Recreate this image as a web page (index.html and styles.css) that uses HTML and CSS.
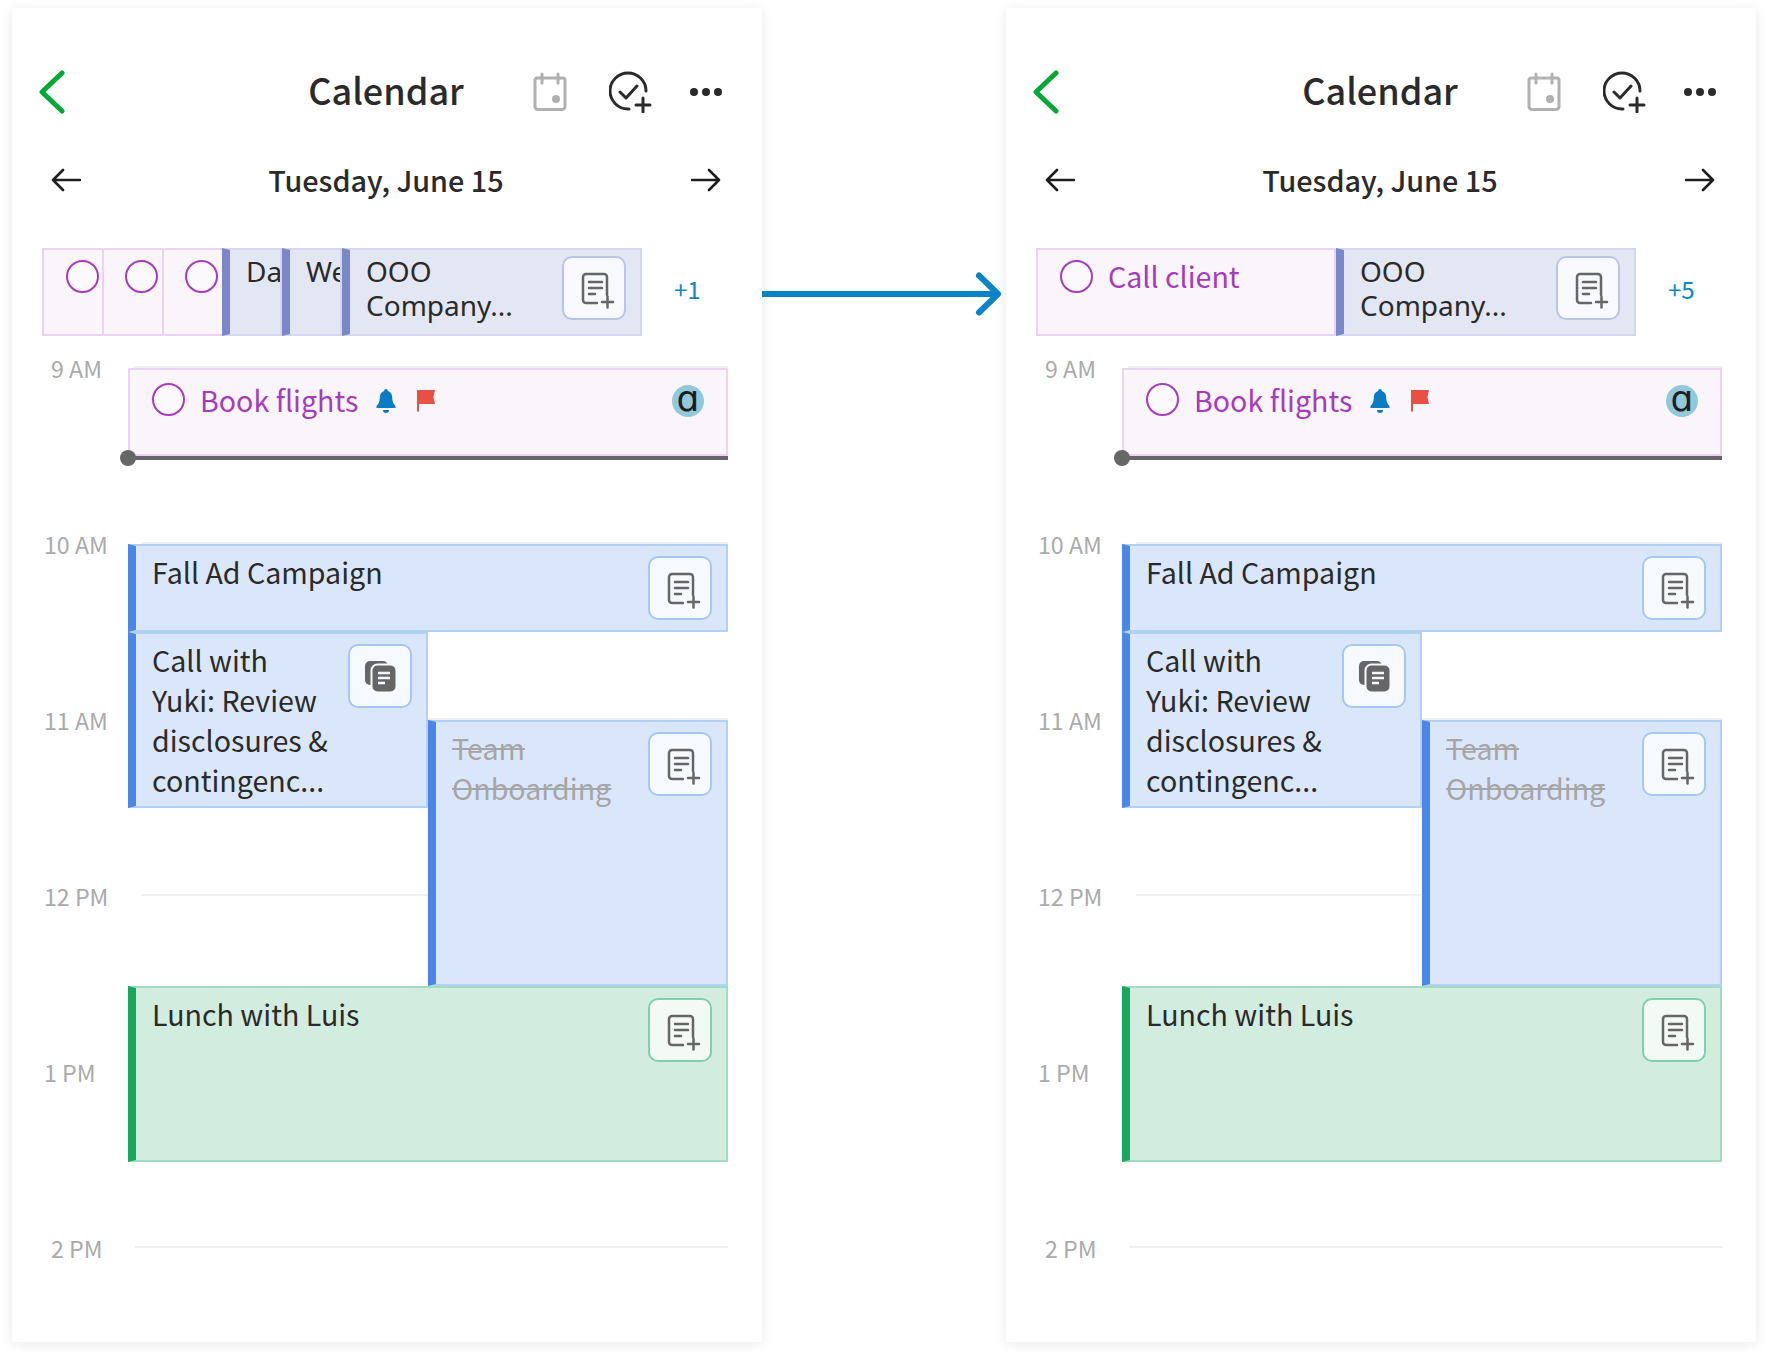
FILE: index.html
```html
<!DOCTYPE html>
<html lang="en">
<head>
<meta charset="utf-8">
<title>Calendar</title>
<link rel="stylesheet" href="styles.css">
</head>
<body>
<svg class="defs" width="0" height="0" aria-hidden="true">
  <symbol id="note" viewBox="0 0 40 40">
    <path d="M32 26V8a3 3 0 0 0-3-3H11a3 3 0 0 0-3 3v23a3 3 0 0 0 3 3h11M14 13h13M14 19h13M14 25h6M27 33h11M32.500 27.500v11" fill="none" stroke="#666" stroke-width="2.5" stroke-linecap="round"/>
  </symbol>
  <symbol id="copy" viewBox="0 0 32 32">
    <rect x="1" y="1" width="23" height="24" rx="5" fill="#666"/>
    <rect x="7.5" y="4.5" width="25" height="28" rx="6" fill="#666" stroke="#f6f9fe" stroke-width="2"/>
    <path d="M14 13h12M14 18h12M14 23h7" stroke="#f6f9fe" stroke-width="2.400"/>
  </symbol>
  <symbol id="back" viewBox="0 0 26 44"><path d="M23 3 3 22l20 19" fill="none" stroke="#00a838" stroke-width="5" stroke-linecap="round" stroke-linejoin="round"/></symbol>
  <symbol id="cal" viewBox="0 0 36 40"><path d="M10 2v9M26 2v9M5 6h26a2.500 2.500 0 0 1 2 2.500v26a3 3 0 0 1-3 3H6a3 3 0 0 1-3-3V8.500A2.500 2.500 0 0 1 5 6z" fill="none" stroke="#b0b0b0" stroke-width="3" stroke-linecap="round"/><circle cx="24" cy="27" r="4" fill="#b0b0b0"/></symbol>
  <symbol id="chk" viewBox="0 0 44 42"><path d="M37 20a18 18 0 1 0-18 18h1M11 21l6 6 11-12M27 34h14M34 27v14" fill="none" stroke="#2a2a2a" stroke-width="3" stroke-linecap="round" stroke-linejoin="round"/></symbol>
  <symbol id="dots" viewBox="0 0 32 8"><circle cx="4" cy="4" r="4" fill="#2a2a2a"/><circle cx="16" cy="4" r="4" fill="#2a2a2a"/><circle cx="28" cy="4" r="4" fill="#2a2a2a"/></symbol>
  <symbol id="left" viewBox="0 0 30 24"><path d="M29 12H2M12 2 2 12l10 10" fill="none" stroke="#1e1e1e" stroke-width="2.600" stroke-linecap="round" stroke-linejoin="round"/></symbol>
  <symbol id="right" viewBox="0 0 30 24"><path d="M1 12h27M18 2l10 10-10 10" fill="none" stroke="#1e1e1e" stroke-width="2.600" stroke-linecap="round" stroke-linejoin="round"/></symbol>
  <symbol id="bell" viewBox="0 0 20 24"><path d="M10 0a1.800 1.800 0 0 1 1.800 2c3 .8 4.400 3.400 4.400 6.500 0 4 1.200 6.500 3.300 8.500v2H.5v-2c2.100-2 3.300-4.500 3.300-8.500 0-3.100 1.400-5.700 4.400-6.500A1.800 1.800 0 0 1 10 0zM7 21h6a3 3 0 0 1-6 0z" fill="#0a7cc4"/></symbol>
  <symbol id="flag" viewBox="0 0 18 22"><path d="M0 0h18l-1.500 7 1.500 7H2v7.500H0z" fill="#ea4f44"/></symbol>
</svg>

<main class="page">
  <section class="panel">
    <header class="top">
      <svg class="ic-back"><use href="#back"/></svg>
      <h1 class="title">Calendar</h1>
      <div class="actions">
        <svg class="ic-cal"><use href="#cal"/></svg>
        <svg class="ic-chk"><use href="#chk"/></svg>
        <svg class="ic-dots"><use href="#dots"/></svg>
      </div>
    </header>
    <nav class="dateline">
      <svg class="ic-arrow"><use href="#left"/></svg>
      <h2 class="date">Tuesday, June 15</h2>
      <svg class="ic-arrow"><use href="#right"/></svg>
    </nav>
    <div class="allday">
      <div class="strip">
        <div class="task-cell"><span class="ring"></span></div>
        <div class="task-cell"><span class="ring"></span></div>
        <div class="task-cell"><span class="ring"></span></div>
        <div class="ooo-cell narrow">Da</div>
        <div class="ooo-cell narrow">We</div>
        <div class="ooo-cell wide"><span class="ooo-text">OOO<br>Company...</span><button class="btn btn-ooo"><svg class="ic-note"><use href="#note"/></svg></button></div>
      </div>
      <span class="more">+1</span>
    </div>
    <div class="timeline">
      <div class="hour short"><span class="hour-label">9 AM</span><span class="hour-rule"></span></div>
      <div class="hour"><span class="hour-label">10 AM</span><span class="hour-rule"></span></div>
      <div class="hour"><span class="hour-label">11 AM</span><span class="hour-rule"></span></div>
      <div class="hour"><span class="hour-label">12 PM</span><span class="hour-rule"></span></div>
      <div class="hour"><span class="hour-label">1 PM</span><span class="hour-rule"></span></div>
      <div class="hour short"><span class="hour-label">2 PM</span><span class="hour-rule"></span></div>

      <div class="event task ev-book">
        <span class="ring"></span><span class="task-name">Book flights</span>
        <svg class="ic-bell"><use href="#bell"/></svg>
        <svg class="ic-flag"><use href="#flag"/></svg>
        <span class="avatar">ɑ</span>
      </div>
      <div class="now"></div>
      <div class="event blue ev-fall"><span class="ev-text">Fall Ad Campaign</span><button class="btn btn-blue"><svg class="ic-note"><use href="#note"/></svg></button></div>
      <div class="event blue ev-call"><span class="ev-text">Call with<br>Yuki: Review<br>disclosures &amp;<br>contingenc...</span><button class="btn btn-blue"><svg class="ic-copy"><use href="#copy"/></svg></button></div>
      <div class="event blue ev-team"><span class="ev-text struck">Team<br>Onboarding</span><button class="btn btn-blue"><svg class="ic-note"><use href="#note"/></svg></button></div>
      <div class="event green ev-lunch"><span class="ev-text">Lunch with Luis</span><button class="btn btn-green"><svg class="ic-note"><use href="#note"/></svg></button></div>
    </div>
  </section>

  <div class="flow-arrow">
    <svg width="244" height="48" viewBox="0 0 244 48"><path d="M0 24h236" fill="none" stroke="#0a84c6" stroke-width="6"/><path d="M217 5.500 236 24l-19 18.500" fill="none" stroke="#0a84c6" stroke-width="6" stroke-linecap="round" stroke-linejoin="round"/></svg>
  </div>

  <section class="panel">
    <header class="top">
      <svg class="ic-back"><use href="#back"/></svg>
      <h1 class="title">Calendar</h1>
      <div class="actions">
        <svg class="ic-cal"><use href="#cal"/></svg>
        <svg class="ic-chk"><use href="#chk"/></svg>
        <svg class="ic-dots"><use href="#dots"/></svg>
      </div>
    </header>
    <nav class="dateline">
      <svg class="ic-arrow"><use href="#left"/></svg>
      <h2 class="date">Tuesday, June 15</h2>
      <svg class="ic-arrow"><use href="#right"/></svg>
    </nav>
    <div class="allday">
      <div class="strip">
        <div class="task-cell merged"><span class="ring"></span><span class="task-name">Call client</span></div>
        <div class="ooo-cell wide"><span class="ooo-text">OOO<br>Company...</span><button class="btn btn-ooo"><svg class="ic-note"><use href="#note"/></svg></button></div>
      </div>
      <span class="more">+5</span>
    </div>
    <div class="timeline">
      <div class="hour short"><span class="hour-label">9 AM</span><span class="hour-rule"></span></div>
      <div class="hour"><span class="hour-label">10 AM</span><span class="hour-rule"></span></div>
      <div class="hour"><span class="hour-label">11 AM</span><span class="hour-rule"></span></div>
      <div class="hour"><span class="hour-label">12 PM</span><span class="hour-rule"></span></div>
      <div class="hour"><span class="hour-label">1 PM</span><span class="hour-rule"></span></div>
      <div class="hour short"><span class="hour-label">2 PM</span><span class="hour-rule"></span></div>

      <div class="event task ev-book">
        <span class="ring"></span><span class="task-name">Book flights</span>
        <svg class="ic-bell"><use href="#bell"/></svg>
        <svg class="ic-flag"><use href="#flag"/></svg>
        <span class="avatar">ɑ</span>
      </div>
      <div class="now"></div>
      <div class="event blue ev-fall"><span class="ev-text">Fall Ad Campaign</span><button class="btn btn-blue"><svg class="ic-note"><use href="#note"/></svg></button></div>
      <div class="event blue ev-call"><span class="ev-text">Call with<br>Yuki: Review<br>disclosures &amp;<br>contingenc...</span><button class="btn btn-blue"><svg class="ic-copy"><use href="#copy"/></svg></button></div>
      <div class="event blue ev-team"><span class="ev-text struck">Team<br>Onboarding</span><button class="btn btn-blue"><svg class="ic-note"><use href="#note"/></svg></button></div>
      <div class="event green ev-lunch"><span class="ev-text">Lunch with Luis</span><button class="btn btn-green"><svg class="ic-note"><use href="#note"/></svg></button></div>
    </div>
  </section>
</main>
</body>
</html>
```

FILE: styles.css
```css
* { box-sizing: border-box; }
html, body { margin: 0; padding: 0; background: #fff; }
body { font-family: "Noto Sans CJK JP", "Noto Sans", sans-serif; color: #2a2a2a; }
.defs { position: absolute; }
svg { display: block; flex: none; overflow: visible; }

.page { display: flex; padding: 8px 12px 16px; height: 1358px; }
.panel { width: 750px; height: 1334px; background: #fff; flex: none; display: flex; flex-direction: column; box-shadow: 0 2px 12px rgba(0,0,0,.09); }
.flow-arrow { flex: 1; padding-top: 262px; }

.top { flex: none; display: grid; grid-template-columns: 1fr auto 1fr; align-items: center; height: 48px; margin-top: 60px; padding: 0 40px; }
.title { margin: -7px 0 0 -2px; font-size: 36px; line-height: 48px; font-weight: 500; text-align: center; }
.ic-back { width: 26px; height: 44px; margin-left: -13px; }
.actions { display: flex; align-items: center; justify-content: flex-end; }
.ic-cal { width: 36px; height: 40px; margin-right: 41px; }
.ic-chk { width: 44px; height: 42px; margin-right: 37px; }
.ic-dots { width: 32px; height: 8px; }

.dateline { flex: none; display: flex; align-items: center; justify-content: space-between; height: 40px; margin-top: 44px; padding: 0 41px 0 39px; }
.date { margin: 0; font-size: 28.8px; line-height: 40px; font-weight: 500; }
.ic-arrow { width: 30px; height: 24px; }

.allday { flex: none; display: flex; align-items: center; height: 88px; margin-top: 48px; padding-left: 30px; }
.strip { display: flex; width: 600px; height: 88px; }
.more { font-size: 24px; line-height: 32px; color: #0f85c6; margin: -6px 0 0 32px; }

.task-cell { width: 60px; height: 88px; background: #f9f5fb; border: 2px solid #e9d3f2; border-left-width: 0; padding: 10px 0 0 21px; }
.task-cell:first-child { width: 62px; border-left-width: 2px; padding-left: 22px; }
.task-cell:nth-child(3) { width: 58px; border-right-width: 0; }
.task-cell.merged { width: 300px; border-right-width: 2px; display: flex; align-items: flex-start; gap: 15px; }
.ring { display: block; flex: none; width: 33px; height: 33px; border: 2px solid #a63bbe; border-radius: 50%; background: #fcf9fd; }
.task-name { font-size: 28.6px; line-height: 40px; color: #a63bbe; }
.merged .task-name { margin-top: -4px; }

.ooo-cell { display: flex; justify-content: space-between; height: 88px; background: #e3e7f4; border: 2px solid #d4d8ee; border-left: 8px solid #7a88c8; overflow: hidden; font-family: "Noto Sans", sans-serif; font-size: 28px; line-height: 34px; }
.ooo-cell.narrow { width: 60px; padding: 4px 0 0 16px; white-space: nowrap; }
.ooo-cell.wide { width: 300px; padding: 4px 14px 0 16px; }
.ooo-cell.wide .btn { margin-top: 2px; }
.ooo-text { display: block; }

.btn { display: flex; align-items: center; justify-content: center; flex: none; width: 64px; height: 64px; padding: 0; border-radius: 10px; border: 2px solid; background: #f6f9fe; }
.btn-ooo { background: #f8f9fd; border-color: #bcc3e8; }
.btn-blue { background: #f6f9fe; border-color: #a6c7f5; }
.btn-green { background: #f3faf6; border-color: #7fd1ab; }
.ic-note { width: 40px; height: 40px; margin: 2px 0 0 2px; }
.ic-copy { width: 32px; height: 32px; }

.timeline { position: relative; flex: 1; min-height: 0; padding-top: 30px; }
.hour { display: flex; height: 176px; padding-right: 34px; padding-left: 32px; }
.hour:last-of-type { height: 96px; }
.hour.short { padding-left: 39px; }
.hour-label { font-size: 23.2px; line-height: 32px; color: #aaa; margin: -14px 34px 0 0; height: 32px; white-space: nowrap; }
.short .hour-label { margin-right: 32px; }
.hour-rule { flex: 1; height: 2px; background: #f0f0f0; }

.event { position: absolute; display: flex; justify-content: space-between; align-items: flex-start; border: 2px solid; }
.event.blue { background: #dae7fb; border-color: #b5d0f5; border-left: 8px solid #4a86e8; padding: 10px 14px 0 16px; }
.event.green { background: #d2ecdf; border-color: #a0dcc0; border-left: 8px solid #16a85f; padding: 10px 14px 0 16px; }
.event.task { background: #f9f5fb; border-color: #e9d3f2; padding: 13px 22px 0 22px; justify-content: flex-start; align-items: flex-start; }
.ev-text { font-size: 28.6px; line-height: 40px; margin-top: -4px; }
.struck { color: #a6a6a6; text-decoration: line-through; }

.ev-book { left: 116px; top: 32px; width: 600px; height: 88px; }
.ev-book .task-name { margin-left: 15px; line-height: 38px; margin-top: -2px; }
.ic-bell { width: 20px; height: 24px; margin: 6px 0 0 18px; }
.ic-flag { width: 18px; height: 22px; margin: 7px 0 0 21px; }
.avatar { margin: 2px 0 0 auto; width: 32px; height: 32px; border-radius: 50%; background: #92c8dc; font-family: "DejaVu Sans", sans-serif; font-size: 36px; line-height: 28px; text-align: center; color: #1e1e1e; }
.now { position: absolute; left: 116px; top: 120px; width: 600px; height: 4px; background: #666; }
.now::before { content: ""; position: absolute; left: -8px; top: -6px; width: 16px; height: 16px; border-radius: 50%; background: #666; }

.ev-fall { left: 116px; top: 208px; width: 600px; height: 88px; }
.ev-call { left: 116px; top: 296px; width: 300px; height: 176px; }
.ev-team { left: 416px; top: 384px; width: 300px; height: 266px; }
.ev-lunch { left: 116px; top: 650px; width: 600px; height: 176px; }
```
